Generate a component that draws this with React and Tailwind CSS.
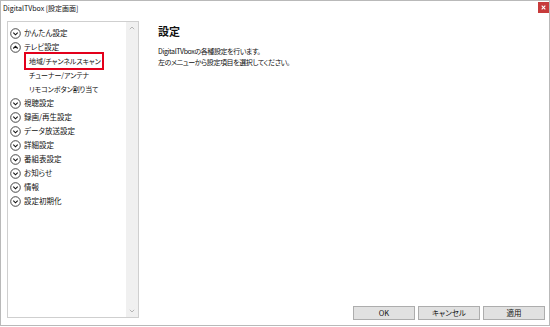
const font = {
  fontFamily: '"Noto Sans CJK JP", "Noto Sans", sans-serif',
};

function CircleChevron({ up = false }) {
  return (
    <svg width="11" height="11" viewBox="0 0 11 11" className="shrink-0">
      <circle cx="5.5" cy="5.5" r="4.8" fill="none" stroke="#333" strokeWidth="0.9" />
      {up ? (
        <path d="M3.3 6.5 L5.5 4.3 L7.7 6.5" fill="none" stroke="#111" strokeWidth="1.1" />
      ) : (
        <path d="M3.3 4.6 L5.5 6.8 L7.7 4.6" fill="none" stroke="#111" strokeWidth="1.1" />
      )}
    </svg>
  );
}

const topItems = [
  { label: "かんたん設定" },
  {
    label: "テレビ設定",
    open: true,
    children: ["地域/チャンネルスキャン", "チューナー/アンテナ", "リモコンボタン割り当て"],
  },
  { label: "視聴設定" },
  { label: "録画/再生設定" },
  { label: "データ放送設定" },
  { label: "詳細設定" },
  { label: "番組表設定" },
  { label: "お知らせ" },
  { label: "情報" },
  { label: "設定初期化" },
];

function MenuTree() {
  return (
    <div className="flex flex-col pt-[4px] pl-[2px]">
      {topItems.map((item) => (
        <div key={item.label} className="flex flex-col">
          <div className="flex h-[14px] items-center gap-[3px]">
            <CircleChevron up={item.open} />
            <span className="text-[7.5px] leading-none text-[#111] [font-feature-settings:'palt']">
              {item.label}
            </span>
          </div>
          {item.children &&
            item.children.map((child, index) => (
              <div key={child} className="relative flex h-[14px] items-center pl-[19px]">
                {index === 0 && (
                  <span className="absolute left-[14px] top-[-2px] h-[18px] w-[80px] border-2 border-[#e3001b]" />
                )}
                <span className="text-[7px] leading-none tracking-[-0.1px] text-[#111] [font-feature-settings:'palt']">
                  {child}
                </span>
              </div>
            ))}
        </div>
      ))}
    </div>
  );
}

function Button({ children }) {
  return (
    <button className="flex h-[14px] w-[62px] items-center justify-center border border-[#adadad] bg-[#e1e1e1] text-[7.5px] leading-none text-[#111] [font-feature-settings:'palt']">
      {children}
    </button>
  );
}

export default function App() {
  return (
    <div className="h-[327px] w-[550px] bg-white" style={font}>
      <div className="flex h-[326px] w-[550px] flex-col border border-[#b9b9b9] bg-white">
        <div className="flex h-[20px] items-start justify-between">
          <span className="pl-[2px] pt-[3px] text-[7px] leading-[9px] text-[#111] [font-feature-settings:'palt']">
            DigitalTVbox [設定画面]
          </span>
          <div className="mt-[1px] flex h-[11px] w-[11px] items-center justify-center bg-[#c73b3b]">
            <svg width="5" height="5" viewBox="0 0 5 5">
              <path d="M0.7 0.7 L4.3 4.3 M4.3 0.7 L0.7 4.3" stroke="#fff" strokeWidth="1.1" />
            </svg>
          </div>
        </div>
        <div className="flex flex-1 pl-[6px]">
          <div className="flex h-[297px] w-[132px] border border-[#cfcfcf] bg-white">
            <div className="flex-1">
              <MenuTree />
            </div>
            <div className="flex w-[12px] flex-col items-center justify-between bg-[#f0f0f0] py-[4px]">
              <svg width="6" height="4" viewBox="0 0 6 4">
                <path d="M0.8 3.2 L3 1 L5.2 3.2" fill="none" stroke="#b5b5b5" strokeWidth="1" />
              </svg>
              <svg width="6" height="4" viewBox="0 0 6 4">
                <path d="M0.8 0.8 L3 3 L5.2 0.8" fill="none" stroke="#b5b5b5" strokeWidth="1" />
              </svg>
            </div>
          </div>
          <div className="flex flex-1 flex-col pl-[19px] pr-[4px]">
            <h1 className="pt-[4px] text-[11px] font-bold leading-[12px] text-[#111]">設定</h1>
            <p className="mt-[9px] text-[7px] leading-[11px] tracking-[-0.4px] text-[#111] [font-feature-settings:'palt']">
              DigitalTVboxの各種設定を行います。
              <br />
              左のメニューから設定項目を選択してください。
            </p>
            <div className="mt-auto mb-[5px] flex justify-end gap-[3px]">
              <Button>OK</Button>
              <Button>キャンセル</Button>
              <Button>適用</Button>
            </div>
          </div>
        </div>
      </div>
    </div>
  );
}
